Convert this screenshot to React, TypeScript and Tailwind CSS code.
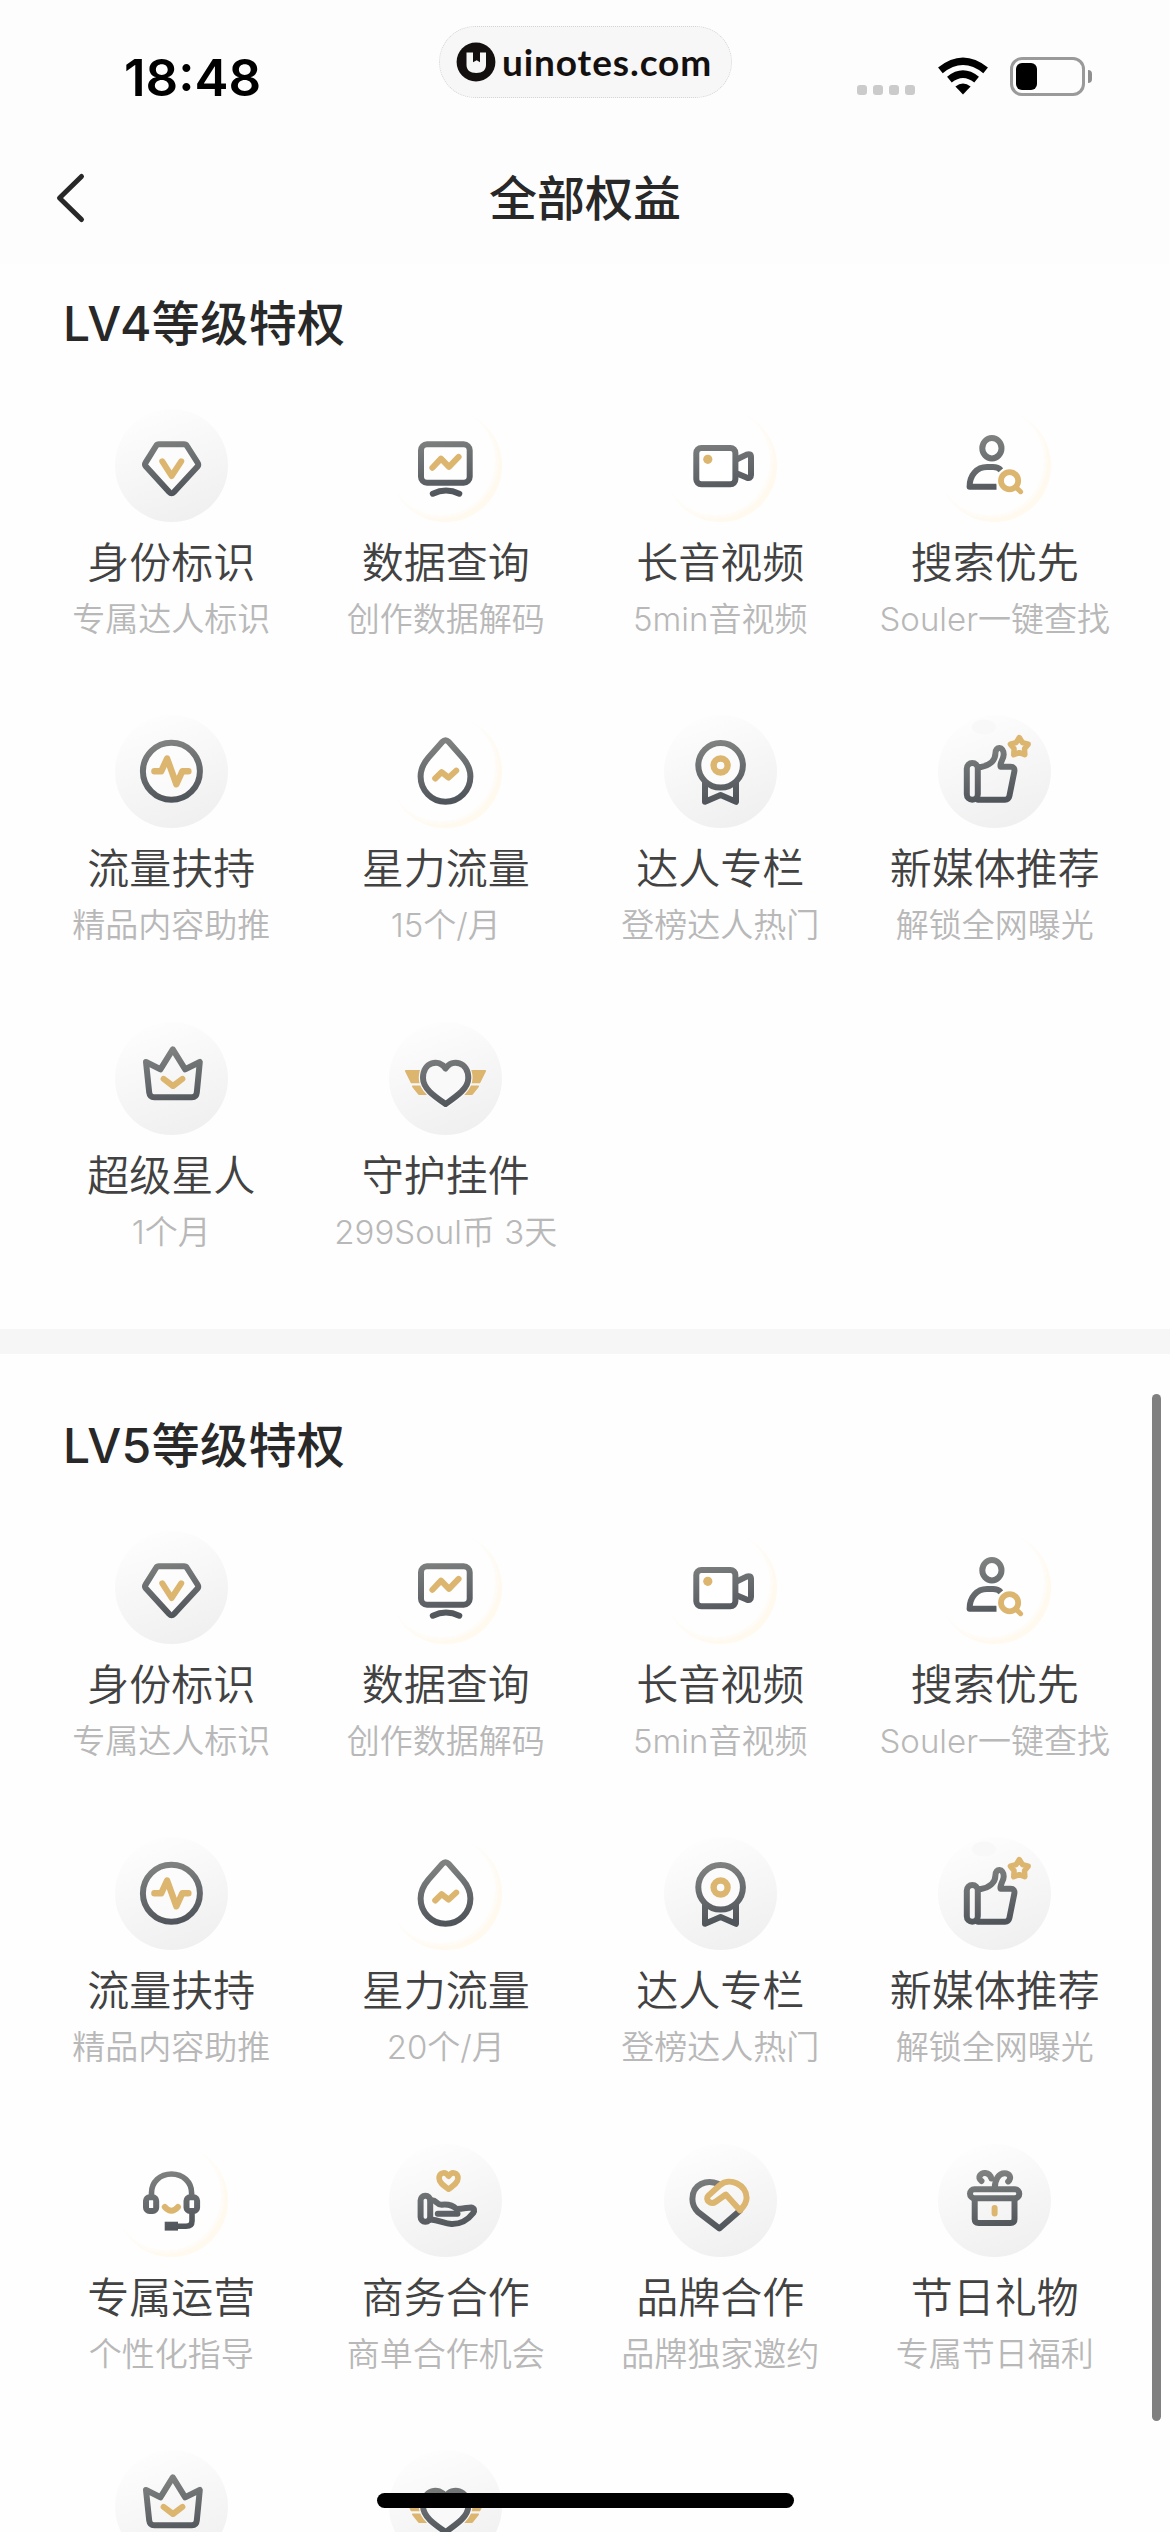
import type { ReactNode } from "react";

type IconName =
  | "identity"
  | "data"
  | "video"
  | "search"
  | "traffic"
  | "drop"
  | "medal"
  | "thumb"
  | "crown"
  | "guard"
  | "headset"
  | "business"
  | "brand"
  | "gift";

interface IPrivilege {
  icon: IconName;
  name?: string;
  desc?: string;
}

interface PrivilegeSectionProps {
  title: string;
  items: IPrivilege[];
  className?: string;
}

const GOLD = "#dcb56f";
const DARK = "url(#icon-dark)";

// 带金色描边的圆形底
const GOLD_RING_ICONS: IconName[] = ["data", "video", "search", "drop", "headset"];

const commonItems: IPrivilege[] = [
  { icon: "identity", name: "身份标识", desc: "专属达人标识" },
  { icon: "data", name: "数据查询", desc: "创作数据解码" },
  { icon: "video", name: "长音视频", desc: "5min音视频" },
  { icon: "search", name: "搜索优先", desc: "Souler一键查找" },
  { icon: "traffic", name: "流量扶持", desc: "精品内容助推" },
];

const lv4Items: IPrivilege[] = [
  ...commonItems,
  { icon: "drop", name: "星力流量", desc: "15个/月" },
  { icon: "medal", name: "达人专栏", desc: "登榜达人热门" },
  { icon: "thumb", name: "新媒体推荐", desc: "解锁全网曝光" },
  { icon: "crown", name: "超级星人", desc: "1个月" },
  { icon: "guard", name: "守护挂件", desc: "299Soul币 3天" },
];

const lv5Items: IPrivilege[] = [
  ...commonItems,
  { icon: "drop", name: "星力流量", desc: "20个/月" },
  { icon: "medal", name: "达人专栏", desc: "登榜达人热门" },
  { icon: "thumb", name: "新媒体推荐", desc: "解锁全网曝光" },
  { icon: "headset", name: "专属运营", desc: "个性化指导" },
  { icon: "business", name: "商务合作", desc: "商单合作机会" },
  { icon: "brand", name: "品牌合作", desc: "品牌独家邀约" },
  { icon: "gift", name: "节日礼物", desc: "专属节日福利" },
  { icon: "crown" },
  { icon: "guard" },
];

const icons: Record<IconName, ReactNode> = {
  identity: (
    <>
      <path
        d="M44 35.3H69Q71 35.3 72 37L82.5 53.5Q84 55.8 82.3 57.8L59 83Q56.6 85.5 54.2 83L31.2 57.8Q29.2 55.8 30.7 53.5L41 37Q42 35.3 44 35.3Z"
        fill="#fff"
        fillOpacity={0.6}
      />
      <path d="M47.3 52.3L56.6 67L66.2 52.3" stroke={GOLD} />
    </>
  ),
  data: (
    <>
      <rect x="32" y="35.3" width="48.7" height="38.4" rx="6" />
      <path d="M43.8 84.7Q57 78.5 70.3 84.7" />
      <path d="M43.4 58.7L52 49.6L60 57.8L69.6 47.9" stroke={GOLD} />
    </>
  ),
  video: (
    <>
      <path d="M73 50.3L82.6 45.6Q87 44 87 48V66Q87 70 82.6 68.6L73 64.4" />
      <rect x="32.3" y="39" width="39.1" height="36.3" rx="5" fill="#fff" />
      <circle cx="43.8" cy="50.3" r="4.6" fill={GOLD} stroke="none" />
    </>
  ),
  search: (
    <>
      <ellipse cx="53.9" cy="39.2" rx="9.6" ry="10.2" />
      <path
        d="M58.5 77.7H31.6C31.6 66 39 58 49 58H55Q60 58 63 61.2"
        strokeLinecap="butt"
      />
      <circle cx="71.6" cy="71.7" r="13.4" fill="#fff" stroke="none" />
      <circle cx="71.6" cy="71.7" r="8.6" stroke={GOLD} strokeWidth={5.8} />
      <path d="M78.5 78.7L82.6 82.7" stroke={GOLD} strokeWidth={5} />
    </>
  ),
  traffic: (
    <>
      <circle cx="56.4" cy="56.3" r="28.5" fill="#fff" fillOpacity={0.5} />
      <path
        d="M39.4 56.3H46.2L52.1 43.5L61.4 69.3L67.3 56.3H73.4"
        stroke={GOLD}
        strokeWidth={6.4}
      />
    </>
  ),
  drop: (
    <>
      <path d="M53.4 26.8Q56.5 23.5 59.6 26.8L73.5 42.5C79 49 81.4 54.5 81.4 61.4A24.9 25.3 0 0 1 31.6 61.4C31.6 54.5 34 49 39.5 42.5Z" />
      <path d="M46.2 63.5L52.6 57.2L59.6 62.6L67.2 55.6" stroke={GOLD} />
    </>
  ),
  medal: (
    <>
      <path d="M41 66V86.8L56.6 80L72 86.8V66" />
      <circle cx="56.6" cy="50.3" r="22.3" fill="#fbfbfb" />
      <circle cx="56.6" cy="50.5" r="7" stroke={GOLD} strokeWidth={6.4} />
    </>
  ),
  thumb: (
    <>
      <ellipse cx="46" cy="12" rx="12" ry="7.5" fill="#f8f8f8" stroke="none" />
      <path d="M40 52H43C51 50.5 57.4 46 57.4 38.5C57.4 31 65.7 31 65.7 39.5C65.7 44 61.5 47.5 62.6 51.7H72.5Q77.2 51.7 76.3 56.7L71.4 81Q70.6 84.7 67 84.7H40" />
      <rect x="28.8" y="48" width="11" height="36.7" rx="5.5" />
      <path
        d="M81.3 22.5L84.5 27.6L90.2 29.2L86.5 33.8L86.9 39.7L81.3 37.6L75.7 39.7L76.1 33.8L72.4 29.2L78.1 27.6Z"
        stroke={GOLD}
        strokeWidth={5.4}
      />
    </>
  ),
  crown: (
    <>
      <path d="M31 40L45.4 47.3L57.8 27.4L70.2 47.3L84.8 40L81.8 70.5Q81.3 75.3 77 75.3H39.2Q34.8 75.3 34.2 70.5Z" />
      <path d="M48.6 56.8L58 64L67.4 56.8" stroke={GOLD} />
    </>
  ),
  guard: (
    <>
      <g fill={GOLD} stroke={GOLD} strokeWidth={2}>
        <path d="M17 49H32V60.3H22.6ZM24 64.4H34L38.5 72H30Z" />
        <path d="M96 49H81V60.3H90.4ZM89 64.4H79L74.5 72H83Z" />
      </g>
      <path
        d="M56.6 46.5C50 36.5 34 39.5 34 56C34 66.5 45 74 56.6 82C68 74 79.3 66.5 79.3 56C79.3 39.5 63 36.5 56.6 46.5Z"
        fill="#f9f9f9"
        stroke="#f8f8f8"
        strokeWidth={8.5}
      />
      <path d="M56.6 46.5C50 36.5 34 39.5 34 56C34 66.5 45 74 56.6 82C68 74 79.3 66.5 79.3 56C79.3 39.5 63 36.5 56.6 46.5Z" />
    </>
  ),
  headset: (
    <>
      <path
        d="M36.5 53V49C36.5 38 45 30 56.5 30S76.6 38 76.6 49V53"
        strokeWidth={5.6}
      />
      <rect x="31" y="53.3" width="10.2" height="13.7" rx="3.5" />
      <rect x="71.5" y="53.3" width="10.6" height="13.7" rx="3.5" />
      <path d="M77 70V77Q77 82.3 71 82.3H62" strokeWidth={5.6} />
      <path d="M49.7 77.7H63V86.6H49.7Z" fill={DARK} stroke="none" />
      <path d="M49.8 63Q56.4 70.6 63 63" stroke={GOLD} />
    </>
  ),
  business: (
    <>
      <path
        d="M59.6 32.2C56 26.4 50.1 29 50.1 34.3C50.1 38.5 54 41.2 59.6 45.2C65.2 41.2 69 38.5 69 34.3C69 29 63.2 26.4 59.6 32.2Z"
        stroke={GOLD}
        strokeWidth={5.6}
      />
      <path d="M41.5 56.5C47.5 55 47 60.8 52.5 60.8C59 60 64.5 62 67.5 65C75 64.5 79 63.4 82 63.4Q87 64.5 84 69.3C78.5 76.5 71 80.2 62.5 80C55 79.5 50 76 41.5 75.5" />
      <path d="M48.8 69.7H68.5" />
      <rect x="31.6" y="51.7" width="9.6" height="26" rx="4.6" />
    </>
  ),
  brand: (
    <>
      <path d="M54 39.8C43 35 28.4 40 28.4 55Q28.4 62.5 34 68L55.3 84.4L76 66.5" />
      <path
        d="M76 66.2C81 61.5 82.6 58.5 82.6 53.8C82.6 41 66 32.5 55.5 41.5L44.4 51.6C40.5 55.5 46.5 61.6 52 57.5L61.8 50.5L76 66.2"
        stroke={GOLD}
      />
    </>
  ),
  gift: (
    <>
      <path d="M43.5 37C38.5 33.5 43 28.5 47.5 29Q52 29.5 53.4 34.5" />
      <path d="M56.8 44C56.8 36 60.5 29.2 66.5 29.2C71.8 29.2 74 34 70.2 37.4" />
      <path d="M36.7 56V75Q36.7 79 40.7 79H72.5Q76.5 79 76.5 75V56" />
      <rect x="32" y="45.3" width="49.3" height="8.9" rx="4.4" />
      <path d="M56.6 63.9V69.4" stroke={GOLD} />
    </>
  ),
};

const PrivilegeItem = ({ icon, name, desc }: IPrivilege) => {
  const hasGoldRing = GOLD_RING_ICONS.includes(icon);

  return (
    <li className="flex flex-col items-center whitespace-nowrap">
      <div
        className={`size-[113px] rounded-full ${hasGoldRing ? "shadow-[inset_-5px_-5px_4px_#fff9ee]" : "bg-linear-160 from-[#fefefe] from-5% to-[#eeeeee]"}`}
      >
        <svg
          viewBox="0 0 113 113"
          className="size-full"
          fill="none"
          stroke={DARK}
          strokeWidth={6}
          strokeLinecap="round"
          strokeLinejoin="round"
        >
          {icons[icon]}
        </svg>
      </div>
      {name && (
        <h3 className="mt-5 text-[42px] leading-[42px] font-[350] text-[#424242]">
          {name}
        </h3>
      )}
      {desc && (
        <p className="mt-[17px] text-[33px] leading-[36px] font-[350] text-[#b8b8b8]">
          {desc}
        </p>
      )}
    </li>
  );
};

const PrivilegeSection = ({
  title,
  items,
  className = "",
}: PrivilegeSectionProps) => (
  <section className={`bg-[#fefefe] ${className}`}>
    <h2 className="pl-[63px] text-[48px] leading-[60px] font-medium tracking-[0.4px] text-[#282828]">
      {title}
    </h2>
    <ul className="mt-[55px] ml-[34px] grid w-[1098px] auto-rows-[306.3px] grid-cols-4">
      {items.map((item) => (
        <PrivilegeItem key={item.icon} {...item} />
      ))}
    </ul>
  </section>
);

const StatusBar = () => (
  <div className="relative flex h-[132px] items-start justify-between pr-[78px] pl-[124px]">
    <time className="mt-[48px] text-[51px] leading-[60px] font-semibold text-black">
      18:48
    </time>

    <div className="absolute top-[26px] left-[439px] flex h-[72px] w-[293px] items-center rounded-full border border-dotted border-[#d4d4d4] bg-[#f7f7f7] pl-4">
      <svg viewBox="0 0 40 40" className="size-10">
        <circle cx="20" cy="20" r="19.4" fill="#14100f" />
        <path
          d="M10.5 10.5H17V20.3L20.7 18.3L24 20.3V10.5H30V23C30 28 26.5 31 20.3 31S10.5 28 10.5 23Z"
          fill="#f7f7f7"
        />
      </svg>
      <span className="ml-1.5 font-[Lato] text-[37px] leading-[40px] font-bold tracking-[0.9px] text-[#14100f]">
        uinotes.com
      </span>
    </div>

    <div className="mt-[57px] flex items-end">
      <div className="mb-px flex gap-1.5">
        {[1, 2, 3, 4].map((dot) => (
          <span key={dot} className="size-2.5 rounded-[3px] bg-[#cbcbcb]" />
        ))}
      </div>
      <svg
        viewBox="0 0 52 38"
        className="mb-px ml-[22px] h-[38px] w-[52px]"
        fill="none"
        stroke="#000"
        strokeWidth={7.4}
      >
        <path d="M3.4 13.4Q26 -4.8 48.6 13.4" />
        <path d="M12.4 22.6Q26 11.6 39.6 22.6" />
        <path
          d="M18.4 29.5Q26 23.4 33.6 29.5L26 37.4Z"
          fill="#000"
          stroke="none"
        />
      </svg>
      <div className="ml-[21px] flex items-center">
        <div className="h-[39px] w-[75px] rounded-[12px] border-3 border-[#9a9a9a] p-[3px]">
          <div className="h-full w-[21px] rounded-[6px] bg-black" />
        </div>
        <div className="ml-[3px] h-[13px] w-[4px] rounded-r-full bg-[#8f8f8f]" />
      </div>
    </div>
  </div>
);

export default function App() {
  return (
    <div className="relative h-[2532px] w-[1170px] overflow-hidden bg-[#fdfdfd] font-[Inter,'Noto_Sans_CJK_SC',sans-serif]">
      <svg className="absolute size-0">
        <defs>
          <linearGradient
            id="icon-dark"
            gradientUnits="userSpaceOnUse"
            x1="50"
            y1="28"
            x2="60"
            y2="86"
          >
            <stop offset="0" stopColor="#7f8180" />
            <stop offset="1" stopColor="#50555b" />
          </linearGradient>
        </defs>
      </svg>

      <StatusBar />

      <header className="relative flex h-[132px] items-center justify-center">
        <button className="absolute left-[54px]">
          <svg
            viewBox="0 0 34 54"
            className="h-[54px] w-[34px]"
            fill="none"
            stroke="#282828"
            strokeWidth={5}
            strokeLinecap="round"
            strokeLinejoin="round"
          >
            <path d="M27.5 5.5L5.5 27L27.5 48.5" />
          </svg>
        </button>
        <h1 className="pt-0.5 text-[48px] leading-[60px] font-medium text-[#282828]">
          全部权益
        </h1>
      </header>

      <main>
        <PrivilegeSection
          title="LV4等级特权"
          items={lv4Items}
          className="h-[1065px] pt-[30px]"
        />
        <div className="h-[25px] bg-[#f6f6f6]" />
        <PrivilegeSection
          title="LV5等级特权"
          items={lv5Items}
          className="pt-[62px]"
        />
      </main>

      {/* 滚动条 */}
      <div className="absolute top-[1394px] right-[9px] h-[1027px] w-[9px] rounded-full bg-[#808080]" />
      {/* Home 指示条 */}
      <div className="absolute top-[2493px] left-[377px] h-[15px] w-[417px] rounded-full bg-black" />
    </div>
  );
}
